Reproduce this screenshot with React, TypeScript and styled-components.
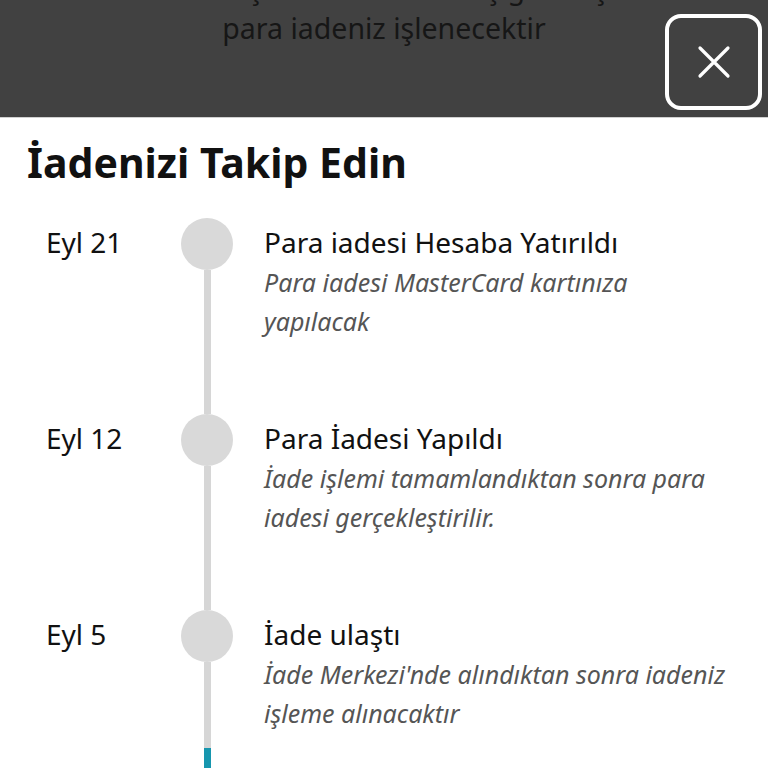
import styled, { createGlobalStyle } from 'styled-components';

const GlobalStyle = createGlobalStyle`
    html, body {
        margin: 0;
        padding: 0;
        background: #ffffff;
    }
    body {
        font-family: 'Noto Sans', 'Open Sans', 'Liberation Sans', sans-serif;
        overflow: hidden;
    }
`;

const Page = styled.div`
    width: 768px;
    height: 768px;
    overflow: hidden;
    display: flex;
    flex-direction: column;
`;

//Dimmed header over the page behind
const Overlay = styled.div`
    position: relative;
    height: 117px;
    flex-shrink: 0;
    background-color: #414141;
    border-bottom: 1px solid #d0d0d0;
    overflow: hidden;
`;

const OverlayText = styled.p`
    margin: -32px 0 0;
    padding: 0 40px;
    text-align: center;
    font-size: 28.5px;
    line-height: 40px;
    color: #161616;
`;

const CloseBtn = styled.button`
    position: absolute;
    top: 14px;
    left: 665px;
    width: 97px;
    height: 96px;
    box-sizing: border-box;
    border: 4px solid #ffffff;
    border-radius: 16px;
    background: transparent;
    display: flex;
    align-items: center;
    justify-content: center;
    padding: 0;
    cursor: pointer;
`;

const Sheet = styled.div`
    flex: 1;
    background: #ffffff;
    padding: 20px 0 0;
    overflow: hidden;
`;

const Title = styled.h1`
    margin: 0 0 32px 27px;
    font-size: 41px;
    line-height: 48px;
    font-weight: 700;
    color: #111111;
`;

const Timeline = styled.ul`
    list-style: none;
    margin: 0;
    padding: 0;
`;

//one event row
const Event = styled.li<{ $last?: boolean }>`
    display: grid;
    grid-template-columns: 135px 52px 1fr;
    padding-left: 46px;
    min-height: ${(p) => (p.$last ? '160px' : '196px')};
`;

const DateLabel = styled.div`
    font-size: 28px;
    line-height: 48px;
    color: #111111;
`;

const Marker = styled.div`
    display: flex;
    flex-direction: column;
    align-items: center;
`;

const Dot = styled.span`
    width: 52px;
    height: 52px;
    border-radius: 50%;
    background: #d9d9d9;
    flex-shrink: 0;
`;

const Connector = styled.span<{ $fill: number }>`
    width: 7px;
    flex: 1;
    background: linear-gradient(
        to bottom,
        #d6d6d6 0%,
        #d6d6d6 ${(p) => 100 - p.$fill}%,
        #1696ae ${(p) => 100 - p.$fill}%,
        #1696ae 100%
    );
`;

const Body = styled.div`
    padding-left: 31px;
    padding-top: 6px;
`;

const EventTitle = styled.div`
    font-size: 28px;
    line-height: 36px;
    color: #111111;
`;

const EventDesc = styled.div`
    margin-top: 3px;
    font-size: 25px;
    line-height: 39px;
    font-style: italic;
    color: #555555;
    max-width: 472px;
`;

const events = [
    {
        date: 'Eyl 21',
        title: 'Para iadesi Hesaba Yatırıldı',
        desc: 'Para iadesi MasterCard kartınıza yapılacak',
        fill: 0,
    },
    {
        date: 'Eyl 12',
        title: 'Para İadesi Yapıldı',
        desc: 'İade işlemi tamamlandıktan sonra para iadesi gerçekleştirilir.',
        fill: 0,
    },
    {
        date: 'Eyl 5',
        title: 'İade ulaştı',
        desc: "İade Merkezi'nde alındıktan sonra iadeniz işleme alınacaktır",
        fill: 20,
    },
];

function App() {
    return (
        <Page>
            <GlobalStyle />
            <Overlay>
                <OverlayText>
                    İadeniz ulaştıktan sonra 3-5 iş günü içinde
                    <br />
                    para iadeniz işlenecektir
                </OverlayText>
                <CloseBtn aria-label="Kapat">
                    <svg width="34" height="34" viewBox="0 0 34 34">
                        <path d="M3 3 L31 31 M31 3 L3 31" stroke="#ffffff" strokeWidth="3.2" strokeLinecap="round" />
                    </svg>
                </CloseBtn>
            </Overlay>
            <Sheet>
                <Title>İadenizi Takip Edin</Title>
                <Timeline>
                    {events.map((v, i) => (
                        <Event key={i} $last={i === events.length - 1}>
                            <DateLabel>{v.date}</DateLabel>
                            <Marker>
                                <Dot />
                                <Connector $fill={v.fill} />
                            </Marker>
                            <Body>
                                <EventTitle>{v.title}</EventTitle>
                                <EventDesc>{v.desc}</EventDesc>
                            </Body>
                        </Event>
                    ))}
                </Timeline>
            </Sheet>
        </Page>
    );
}

export default App;
